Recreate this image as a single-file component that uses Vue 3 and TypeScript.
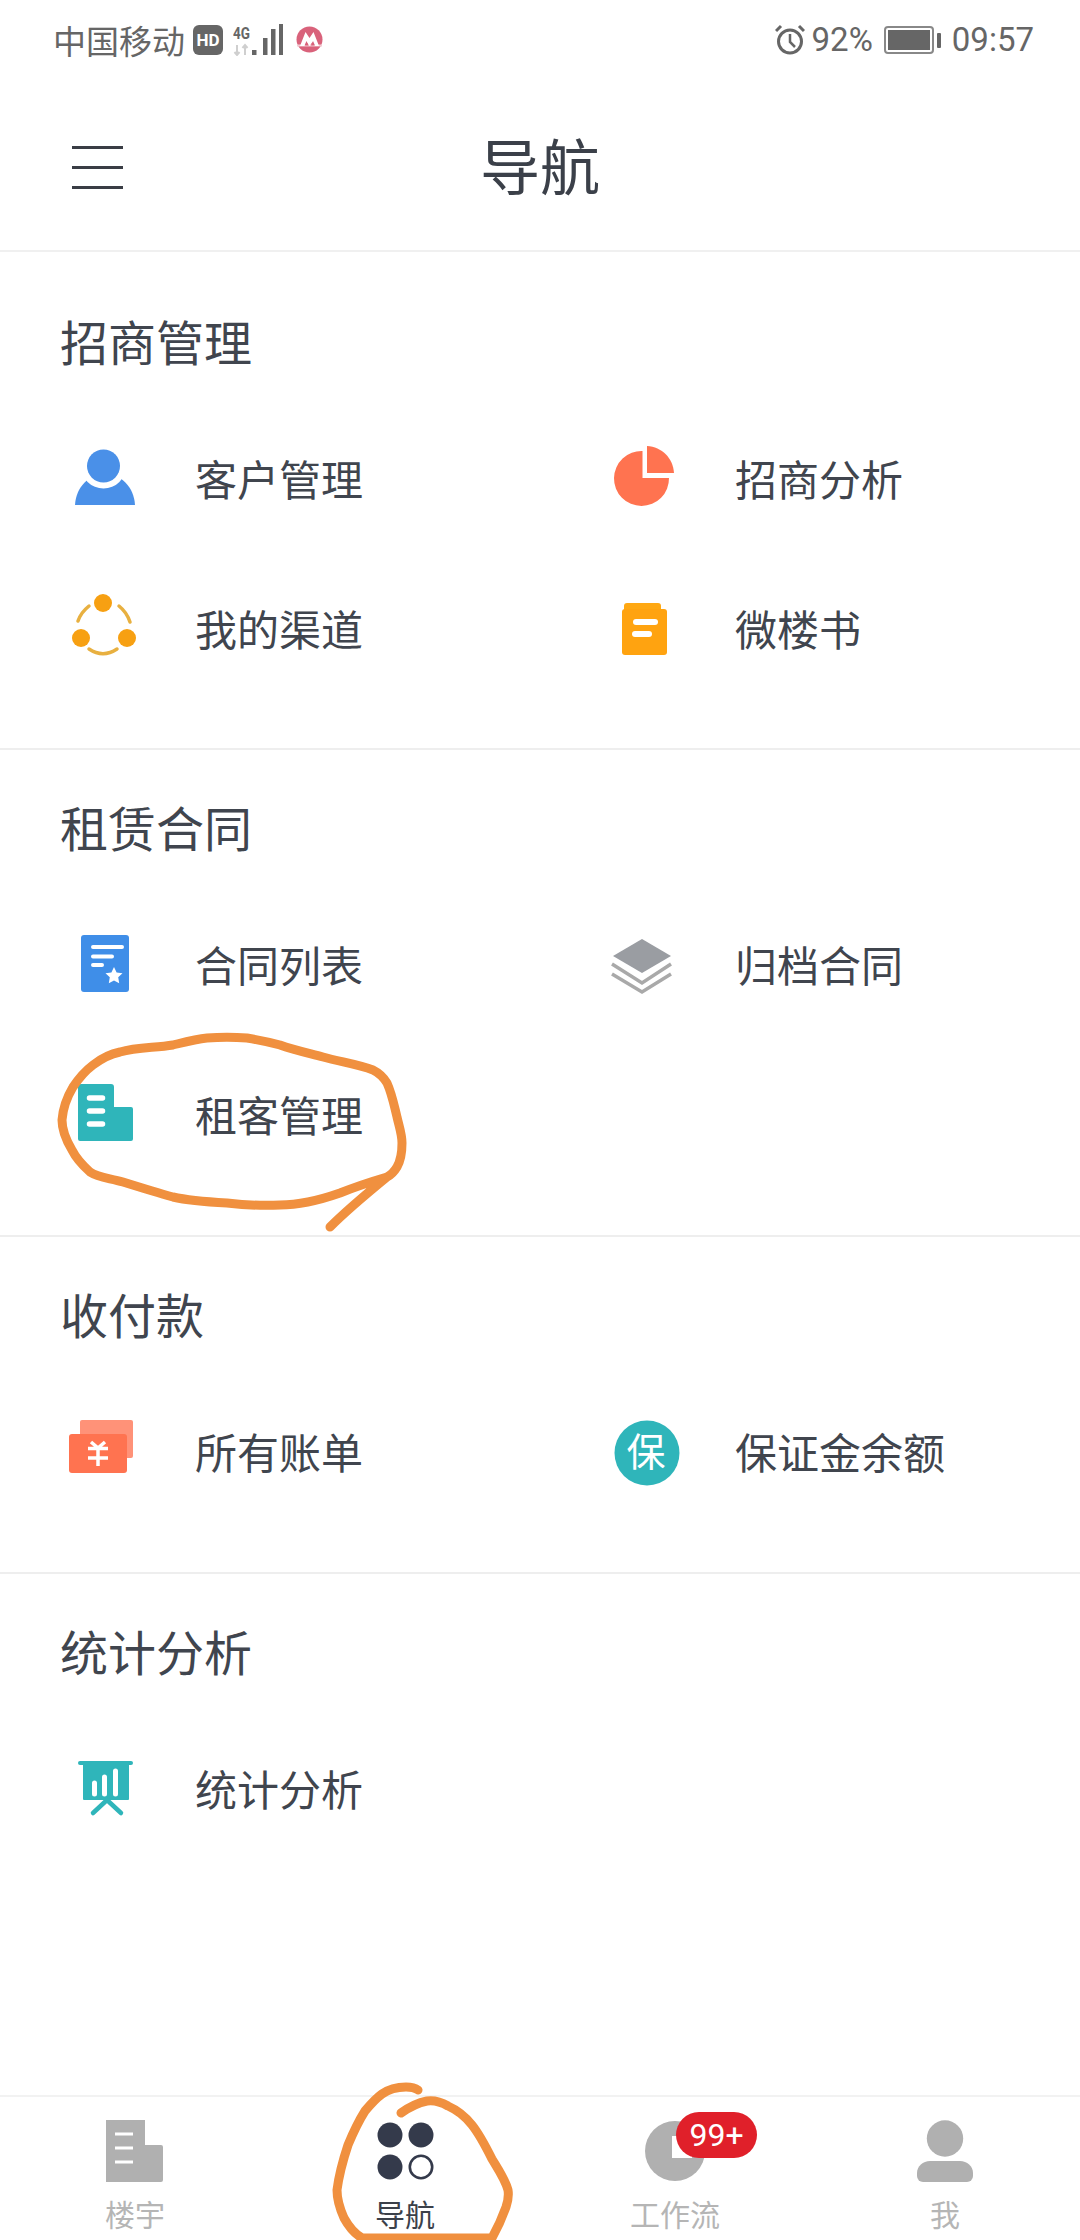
<script setup lang="ts">
interface Item { label: string; icon: string }
interface Section { title: string; items: Item[] }

const sections: Section[] = [
  { title: '招商管理', items: [
    { label: '客户管理', icon: 'person' },
    { label: '招商分析', icon: 'pie' },
    { label: '我的渠道', icon: 'channel' },
    { label: '微楼书', icon: 'book' },
  ] },
  { title: '租赁合同', items: [
    { label: '合同列表', icon: 'contract' },
    { label: '归档合同', icon: 'layers' },
    { label: '租客管理', icon: 'tenant' },
  ] },
  { title: '收付款', items: [
    { label: '所有账单', icon: 'bill' },
    { label: '保证金余额', icon: 'deposit' },
  ] },
  { title: '统计分析', items: [
    { label: '统计分析', icon: 'stats' },
  ] },
]
</script>

<template>
  <div class="page">
    <div class="status">
      <div class="status-side">
        <span class="carrier">中国移动</span>
        <span class="hd">HD</span>
        <svg class="signal" width="50" height="32" viewBox="0 0 50 32">
          <text x="0" y="15" font-size="17" font-weight="700" font-family="Roboto, sans-serif" fill="#666" textLength="17" lengthAdjust="spacingAndGlyphs">4G</text>
          <path d="M4 21v10M1.500 28 4 31l2.500-3M12 31V21M9.500 24 12 21l2.500 3" fill="none" stroke="#cfcfcf" stroke-width="2" />
          <rect x="19" y="26" width="4.500" height="5" fill="#666" />
          <rect x="30" y="14" width="4.500" height="17" fill="#666" />
          <rect x="38" y="5" width="4.500" height="26" fill="#666" />
          <rect x="46" y="0" width="4" height="31" fill="#666" />
        </svg>
        <svg class="bank" width="27" height="27" viewBox="0 0 27 27">
          <circle cx="13.500" cy="13.500" r="13" fill="#d9627b" />
          <path d="M1 20.500h25v-2H1z" fill="#f3c9d1" />
          <path d="M4 20 9.500 6l4 6 4-6L23 20h-5l-1.500-4-3 4-3-4L9 20z" fill="#fff" />
          <path d="M8.500 19.500 10.500 15l2 4.500zM15 19.500 17 15l2 4.500z" fill="#d9627b" />
        </svg>
      </div>
      <div class="status-side">
        <svg width="30" height="31" viewBox="0 0 30 31">
          <circle cx="15" cy="17.500" r="11.500" fill="none" stroke="#666" stroke-width="3" />
          <path d="M15 10v8l5 5" fill="none" stroke="#666" stroke-width="2.500" />
          <path d="M1 7l5-5M29 7l-5-5" fill="none" stroke="#666" stroke-width="3" />
        </svg>
        <span class="pct">92%</span>
        <svg class="battery" width="57" height="28" viewBox="0 0 57 28">
          <rect x="1" y="1" width="48" height="26" rx="3" fill="none" stroke="#888" stroke-width="2" />
          <rect x="4" y="4" width="42" height="20" fill="#666" />
          <rect x="53" y="7" width="4" height="15" rx="1" fill="#666" />
        </svg>
        <span class="time">09:57</span>
      </div>
    </div>

    <header class="header">
      <div class="burger"><i></i><i></i><i></i></div>
      <h1 class="heading">导航</h1>
    </header>

    <main class="content">
      <section v-for="section in sections" :key="section.title" class="section">
        <h2 class="section-title">{{ section.title }}</h2>
        <div class="grid">
          <div v-for="item in section.items" :key="item.label" class="item">
            <svg class="icon" width="80" height="80" viewBox="0 0 80 80">
              <g v-if="item.icon === 'person'">
                <path d="M10 65C11 47 24 34 40 34S69 47 70 65z" fill="#4a90e8" />
                <circle cx="38.500" cy="26" r="22.500" fill="#fff" />
                <circle cx="38.500" cy="26" r="16.500" fill="#4a90e8" />
              </g>
              <g v-else-if="item.icon === 'channel'">
                <path d="M13 31c2-6 6-11 11-15M54 16c5 4 9 10 11 16M24 59c9 6 19 6 28 0" fill="none" stroke="#e8b040" stroke-width="3.500" stroke-linecap="round" />
                <circle cx="38" cy="13" r="9" fill="#f7a012" />
                <circle cx="16" cy="48" r="9" fill="#f7a012" />
                <circle cx="62" cy="48" r="9" fill="#f7a012" />
              </g>
              <g v-else-if="item.icon === 'pie'" fill="#ff7350">
                <path d="M37.500 11V38H64A27.500 27.500 0 1 1 37.500 11z" />
                <path d="M42 6c15 1 26 12 27 27H42z" />
              </g>
              <g v-else-if="item.icon === 'book'">
                <path d="M19 16a3 3 0 0 1 3-3h31a3 3 0 0 1 3 3v6H19z" fill="#ffa812" />
                <rect x="17" y="19" width="45" height="46" rx="3" fill="#ffa310" />
                <rect x="28" y="29" width="25" height="6" rx="3" fill="#fff" />
                <rect x="27" y="41" width="20" height="6" rx="3" fill="#fff" />
              </g>
              <g v-else-if="item.icon === 'contract'">
                <rect x="16" y="9" width="48" height="57" rx="3" fill="#3f8ee8" />
                <path d="M28 21h29M28 30.500h19M28 39h9" stroke="#fff" stroke-width="4" stroke-linecap="round" />
                <path d="M49 41l2.600 5.400 5.900.800-4.300 4.100 1 5.900-5.200-2.800-5.200 2.800 1-5.900-4.300-4.100 5.900-.800z" fill="#fff" />
              </g>
              <g v-else-if="item.icon === 'layers'">
                <path d="M37 13 66 30 37 47 8 30z" fill="#9a9da2" />
                <path d="M7 38 37 57 66 38M7 48 37 66 66 48" fill="none" stroke="#a9a9a9" stroke-width="3.500" />
              </g>
              <g v-else-if="item.icon === 'tenant'">
                <path d="M13 11a3 3 0 0 1 3-3h30a3 3 0 0 1 3 3v20h17a2 2 0 0 1 2 2v30a2 2 0 0 1-2 2H15a2 2 0 0 1-2-2z" fill="#2fb5ba" />
                <path d="M24.500 22h13M24.500 35h13M24.500 48h13" stroke="#fff" stroke-width="5.500" stroke-linecap="round" />
              </g>
              <g v-else-if="item.icon === 'bill'">
                <rect x="15" y="7" width="53" height="38" rx="2" fill="#ff9278" />
                <rect x="4" y="21" width="58" height="39" rx="3" fill="#ff7350" />
                <path d="M26 29l7 6 7-6M23 35.500h20M23 45h20M33 35v18" fill="none" stroke="#fff" stroke-width="3.500" />
              </g>
              <g v-else-if="item.icon === 'stats'">
                <path d="M15 13h51" stroke="#2fb5ba" stroke-width="4" stroke-linecap="round" />
                <rect x="18" y="13" width="46" height="37" rx="1" fill="#2fb5ba" />
                <path d="M29.500 33v11M39.500 27v17M50.500 21v23" stroke="#fff" stroke-width="5" stroke-linecap="round" />
                <path d="M42 50 28 63M42 50 56 63" fill="none" stroke="#2fb5ba" stroke-width="4.500" stroke-linecap="round" />
              </g>
              <g v-else-if="item.icon === 'deposit'">
                <circle cx="42" cy="40" r="32.500" fill="#2fb5ba" />
                <text x="41" y="53" text-anchor="middle" font-size="39" fill="#fff" font-family="'Noto Sans CJK SC', sans-serif">保</text>
              </g>
            </svg>
            <span class="label">{{ item.label }}</span>
          </div>
        </div>
      </section>
    </main>

    <nav class="tabs">
      <div class="tab">
        <svg width="62" height="62" viewBox="0 0 62 62">
          <path d="M2 0h39v25h16a2 2 0 0 1 2 2v33a2 2 0 0 1-2 2H2z" fill="#b0b0b0" />
          <path d="M11 14h18M11 28h18M11 42h18" stroke="#fff" stroke-width="3" />
        </svg>
        <span>楼宇</span>
      </div>
      <div class="tab active">
        <svg width="62" height="62" viewBox="0 0 62 62">
          <circle cx="16" cy="15" r="12.500" fill="#343a4b" />
          <circle cx="47" cy="15" r="12.500" fill="#343a4b" />
          <circle cx="16" cy="47" r="12.500" fill="#343a4b" />
          <circle cx="47" cy="47" r="11.200" fill="none" stroke="#343a4b" stroke-width="2.600" />
        </svg>
        <span>导航</span>
      </div>
      <div class="tab">
        <svg width="62" height="62" viewBox="0 0 62 62">
          <circle cx="31" cy="31" r="30" fill="#b0b0b0" />
          <path d="M28 16h20v22H28z" fill="#fff" />
        </svg>
        <span>工作流</span>
        <b class="badge">99+</b>
      </div>
      <div class="tab">
        <svg width="62" height="62" viewBox="0 0 62 62">
          <circle cx="31" cy="18.500" r="18.200" fill="#b0b0b0" />
          <path d="M3 53c0-7 6-12 13-12h30c7 0 13 5 13 12v3a6 6 0 0 1-6 6H9a6 6 0 0 1-6-6z" fill="#b0b0b0" />
        </svg>
        <span>我</span>
      </div>
    </nav>

    <svg class="ink" width="1080" height="2240" viewBox="0 0 1080 2240">
      <path d="M330 1227C345 1212 365 1195 387 1177C370 1182 355 1187 340 1193C320 1200 300 1205 280 1205C262 1206 245 1205 227 1203C208 1202 190 1201 173 1197C155 1192 139 1187 123 1182C110 1178 99 1178 90 1172C80 1163 76 1158 72 1150C66 1140 62 1130 62 1120C63 1108 67 1097 73 1087C79 1078 85 1071 93 1065C102 1058 110 1054 120 1052C137 1047 155 1048 173 1045C185 1042 196 1039 207 1038C220 1037 234 1037 247 1038C259 1040 269 1042 280 1045C294 1050 308 1053 323 1057C341 1062 357 1064 373 1070C381 1074 384 1078 387 1083C392 1094 394 1105 397 1117C399 1126 402 1134 402 1143C402 1152 401 1160 397 1167C394 1172 391 1175 387 1177" fill="none" stroke="#f0903f" stroke-width="9" stroke-linecap="round" stroke-linejoin="round" />
      <path d="M418 2090C414 2087 410 2087 406 2087C397 2087 389 2089 382 2094C375 2099 370 2105 365 2111C358 2122 353 2133 348 2145C343 2160 339 2175 337 2190C337 2200 340 2209 344 2218C349 2227 355 2234 362 2238H492C497 2229 502 2218 506 2207C508 2201 509 2196 508 2190C505 2179 498 2169 492 2159C486 2147 480 2135 472 2125C465 2116 457 2110 448 2106C441 2102 434 2100 427 2101C417 2103 408 2108 401 2113" fill="none" stroke="#f0903f" stroke-width="9" stroke-linecap="round" stroke-linejoin="round" />
    </svg>
  </div>
</template>

<style scoped>
.page {
  position: relative;
  width: 1080px;
  height: 2240px;
  display: flex;
  flex-direction: column;
  overflow: hidden;
  background: #fff;
  color: #40454e;
  font-family: "Noto Sans CJK SC", "Noto Sans", sans-serif;
}
.status {
  height: 84px;
  flex: none;
  box-sizing: border-box;
  display: flex;
  align-items: center;
  justify-content: space-between;
  padding: 0 46px 5px 53px;
  color: #666;
}
.status-side {
  display: flex;
  align-items: center;
}
.carrier {
  font-size: 33px;
  line-height: 40px;
}
.hd {
  width: 30px;
  height: 30px;
  margin-left: 8px;
  border-radius: 6px;
  background: #666;
  color: #fff;
  font: 700 17px/30px Roboto, sans-serif;
  text-align: center;
}
.signal {
  margin-left: 10px;
}
.bank {
  margin-left: 13px;
}
.pct,
.time {
  font-family: Roboto, sans-serif;
  font-size: 33px;
  line-height: 40px;
}
.pct {
  margin-left: 7px;
}
.battery {
  margin: 0 11px;
}
.header {
  position: relative;
  height: 166px;
  flex: none;
  display: flex;
  align-items: center;
  justify-content: center;
  box-sizing: content-box;
  border-bottom: 2px solid #f0f0f0;
}
.burger {
  position: absolute;
  left: 72px;
  top: 62px;
  width: 51px;
  display: flex;
  flex-direction: column;
  gap: 17px;
}
.burger i {
  display: block;
  height: 3px;
  background: #3a3d45;
}
.heading {
  margin: 0 0 6px;
  font-size: 60px;
  font-weight: 400;
  line-height: 80px;
  color: #3b4049;
}
.content {
  flex: 1;
  min-height: 0;
}
.section {
  padding: 39px 0 44px;
  border-bottom: 2px solid #eeeeee;
}
.section:first-child {
  padding-top: 51px;
  padding-bottom: 43px;
}
.section:last-child {
  border-bottom: 0;
}
.section-title {
  margin: 0 0 0 60px;
  font-size: 48px;
  font-weight: 400;
  line-height: 74px;
}
.grid {
  display: grid;
  grid-template-columns: 540px 540px;
  grid-auto-rows: 150px;
  margin-top: 28px;
}
.item {
  display: flex;
  align-items: center;
  padding-left: 65px;
}
.icon {
  flex: none;
}
.label {
  margin: 0 0 5px 50px;
  font-size: 42px;
  line-height: 60px;
}
.tabs {
  flex: none;
  height: 145px;
  display: grid;
  grid-template-columns: repeat(4, 270px);
  box-sizing: border-box;
  border-top: 2px solid #f2f2f2;
}
.tab {
  position: relative;
  display: flex;
  flex-direction: column;
  align-items: center;
  padding-top: 23px;
  color: #b5b5b5;
  font-size: 30px;
  line-height: 40px;
}
.tab span {
  margin-top: 11px;
}
.tab.active {
  color: #3b4049;
}
.badge {
  position: absolute;
  left: 136px;
  top: 15px;
  width: 81px;
  height: 46px;
  border-radius: 23px;
  background: #e0202a;
  color: #fff;
  font: 400 32px/46px Roboto, sans-serif;
  text-align: center;
}
.ink {
  position: absolute;
  left: 0;
  top: 0;
  pointer-events: none;
}
</style>

<style>
html,
body {
  margin: 0;
  background: #fff;
}
</style>
